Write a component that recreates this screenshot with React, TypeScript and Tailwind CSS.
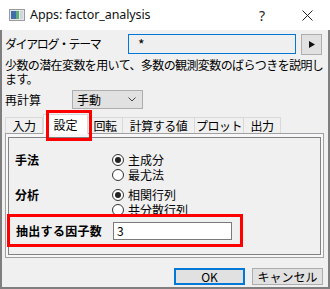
import React from 'react';

const tabs = ['入力', '設定', '回転', '計算する値', 'プロット', '出力'];
const tabWidths: Record<string, string> = {
  '入力': 'w-[38px]',
  '設定': 'w-[45px]',
  '回転': 'w-[36px]',
  '計算する値': 'w-[73px]',
  'プロット': 'w-[50px]',
  '出力': 'w-[38px]',
};

function Radio({ label, checked }: { label: string; checked?: boolean }) {
  return (
    <div className="h-[15px] flex items-center">
      <span className="w-[12px] h-[12px] rounded-full border border-[#333] bg-white flex items-center justify-center">
        {checked && <span className="w-[6px] h-[6px] rounded-full bg-[#222]" />}
      </span>
      <span className="ml-[4px] leading-[15px]">{label}</span>
    </div>
  );
}

function AppIcon() {
  return (
    <svg width="16" height="12" viewBox="0 0 16 12">
      <rect x="0.5" y="0.5" width="15" height="11" fill="#e6e6e6" stroke="#9a9a9a" />
      <rect x="2" y="2" width="5" height="8" fill="#3f6fa8" />
      <rect x="7" y="2" width="3" height="8" fill="#5fae7a" />
      <rect x="11" y="2" width="3" height="8" fill="#cfd6dc" />
    </svg>
  );
}

export default function App() {
  return (
    <div className="w-[330px] h-[289px] bg-white flex flex-col overflow-hidden text-black text-[12px] font-['Noto_Sans','Noto_Sans_CJK_JP',sans-serif]">
      {/* Title bar */}
      <div className="h-[30px] flex items-center shrink-0">
        <div className="ml-[9px] w-[16px] flex items-center"><AppIcon /></div>
        <span className="ml-[5px] text-[12.5px] text-[#111] tracking-[-0.1px]">Apps: factor_analysis</span>
        <div className="ml-auto flex items-center">
          <span className="w-[43px] text-[14px] text-[#222]">?</span>
          <svg width="11" height="11" viewBox="0 0 11 11" className="mr-[17px]">
            <path d="M0.5 0.5 L10.5 10.5 M10.5 0.5 L0.5 10.5" stroke="#222" strokeWidth="1" />
          </svg>
        </div>
      </div>

      {/* Body */}
      <div className="flex-1 bg-[#f0f0f0] border-x-2 border-b-2 border-[#7f7f7f] flex flex-col font-['Noto_Sans_CJK_JP',sans-serif]">
        <div className="mt-[3px] h-[22px] flex items-center">
          <span className="ml-[3px] w-[123px] tracking-[-1.4px] whitespace-nowrap">ダイアログ・テーマ</span>
          <div className="w-[168px] h-[20px] border border-[#0078d7] bg-[#efefef] flex items-center">
            <span className="ml-[9px] text-[14px] leading-none">*</span>
          </div>
          <div className="ml-[5px] w-[21px] h-[21px] border border-[#adadad] bg-[#e1e1e1] flex items-center justify-center">
            <svg width="6" height="7" viewBox="0 0 6 7"><path d="M0 0 L6 3.5 L0 7 Z" fill="#111" /></svg>
          </div>
        </div>

        <div className="mt-[3px] ml-[3px] leading-[14px] whitespace-nowrap tracking-[-0.6px]">
          <div>少数の潜在変数を用いて、多数の観測変数のばらつきを説明し</div>
          <div>ます。</div>
        </div>

        <div className="mt-[4px] h-[19px] flex items-center">
          <span className="ml-[3px] w-[67px]">再計算</span>
          <div className="w-[71px] h-[19px] border border-[#adadad] bg-[#e1e1e1] flex items-center">
            <span className="ml-[4px]">手動</span>
            <svg width="8" height="5" viewBox="0 0 8 5" className="ml-auto mr-[6px]">
              <path d="M0.5 0.5 L4 4 L7.5 0.5" fill="none" stroke="#444" strokeWidth="1" />
            </svg>
          </div>
        </div>

        {/* Tabs */}
        <div className="relative mt-[5px] h-[19px] ml-[3px] flex items-end">
          {tabs.map((t) =>
            t === '設定' ? (
              <div
                key={t}
                className={`${tabWidths[t]} h-[20px] -mb-[1px] bg-white border-x border-t border-[#d9d9d9] flex items-center justify-center relative z-10`}
              >
                {t}
              </div>
            ) : (
              <div
                key={t}
                className={`${tabWidths[t]} h-[16px] border-x border-t border-[#d9d9d9] -ml-px first:ml-0 flex items-center justify-center whitespace-nowrap tracking-[-0.5px]`}
              >
                {t}
              </div>
            )
          )}
          <div className="absolute left-[41px] top-[-4px] w-[46px] h-[31px] border-[3px] border-[#ff0000] z-20" />
        </div>

        {/* Panel */}
        <div className="ml-[3px] w-[319px] h-[125px] border border-[#a0a0a0] bg-[#f7f7f9] pt-[3px] px-[2px] pb-[2px]">
          <div className="relative h-full border border-[#828282] bg-[#f0f0f0] flex flex-col">
            <div className="mt-[14px] flex">
              <span className="ml-[6px] w-[97px] font-bold leading-[15px]">手法</span>
              <div>
                <Radio label="主成分" checked />
                <Radio label="最尤法" />
              </div>
            </div>
            <div className="mt-[5px] flex">
              <span className="ml-[6px] w-[97px] font-bold leading-[15px]">分析</span>
              <div>
                <Radio label="相関行列" checked />
                <Radio label="共分散行列" />
              </div>
            </div>
            <div className="mt-[5px] h-[18px] flex items-center">
              <span className="ml-[7px] w-[97px] font-bold tracking-[0.3px] whitespace-nowrap">抽出する因子数</span>
              <div className="w-[119px] h-[18px] border border-[#7a7a7a] bg-white flex items-center">
                <span className="ml-[3px]">3</span>
              </div>
            </div>
            <div className="absolute left-[-2px] top-[76px] w-[236px] h-[33px] border-[3px] border-[#ff0000]" />
          </div>
        </div>

        {/* Buttons */}
        <div className="mt-[10px] flex">
          <div className="ml-[172px] w-[71px] h-[17px] border-2 border-[#0078d7] bg-[#e1e1e1] flex items-center justify-center">OK</div>
          <div className="ml-[7px] w-[71px] h-[17px] border border-[#adadad] bg-[#e1e1e1] flex items-center justify-center">キャンセル</div>
        </div>
      </div>
    </div>
  );
}
